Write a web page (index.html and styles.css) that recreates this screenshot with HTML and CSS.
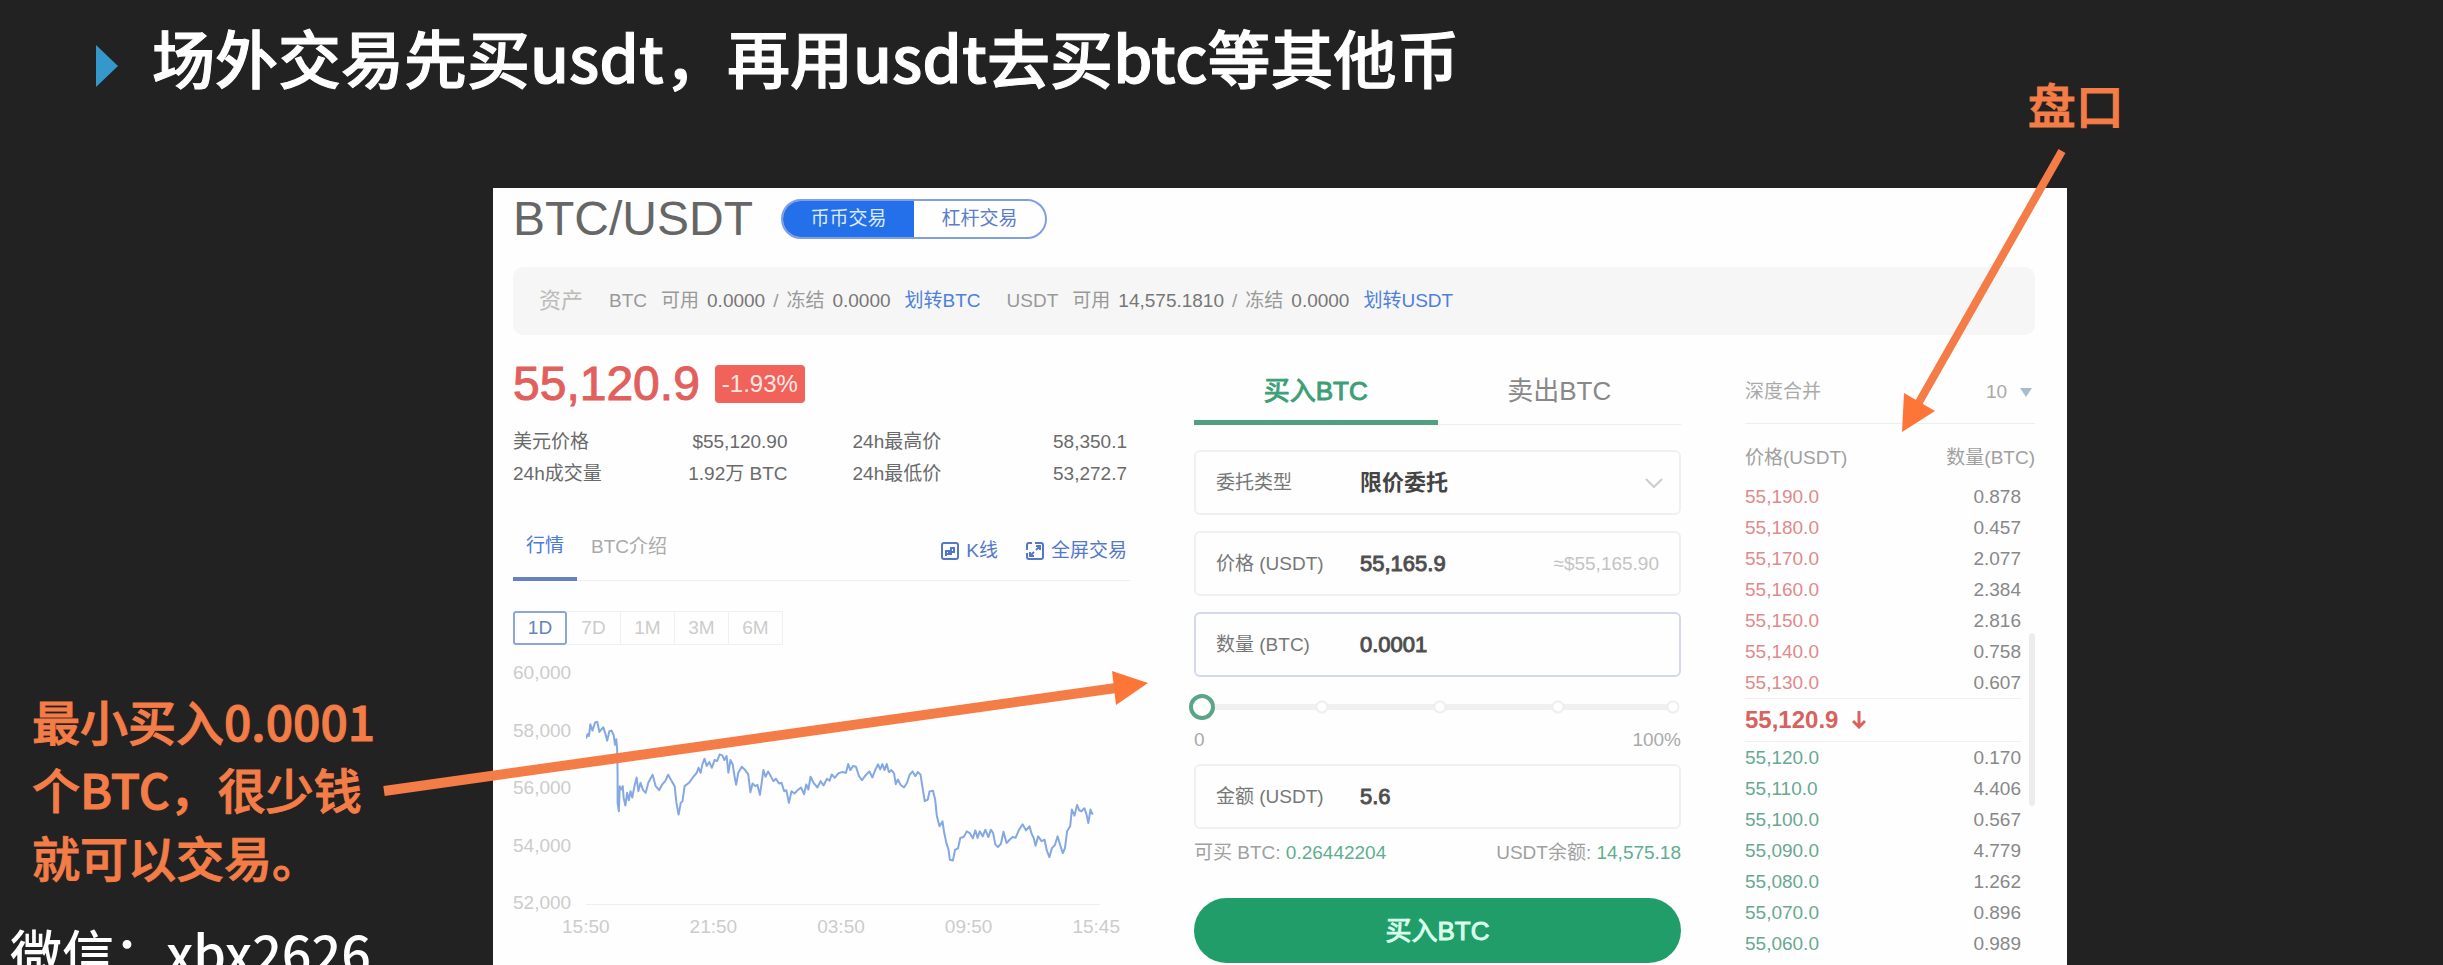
FILE: index.html
```html
<!DOCTYPE html>
<html lang="zh-CN">
<head>
<meta charset="utf-8">
<title>BTC/USDT</title>
<link rel="stylesheet" href="styles.css">
</head>
<body>
<main class="slide">
  <header class="slide-title">
    <svg class="bullet" viewBox="0 0 22 42" aria-hidden="true"><path d="M0 0L22 21L0 42Z"/></svg>
    <h1>场外交易先买usdt，再用usdt去买btc等其他币</h1>
  </header>

  <aside class="notes">
    <p class="note">最小买入0.0001<br>个BTC，很少钱<br>就可以交易。</p>
    <p class="wechat">微信：xbx2626</p>
  </aside>

  <section class="panel">
    <div class="pair">
      <h2>BTC/USDT</h2>
      <div class="mode">
        <button class="mode-btn active" type="button">币币交易</button>
        <button class="mode-btn" type="button">杠杆交易</button>
      </div>
    </div>

    <div class="assets">
      <span class="assets-title">资产</span>
      <div class="asset">
        <span class="coin">BTC</span>
        <span class="amounts"><span>可用</span><b>0.0000</b><span>/</span><span>冻结</span><b>0.0000</b></span>
        <a class="link" href="#">划转BTC</a>
      </div>
      <div class="asset">
        <span class="coin">USDT</span>
        <span class="amounts"><span>可用</span><b>14,575.1810</b><span>/</span><span>冻结</span><b>0.0000</b></span>
        <a class="link" href="#">划转USDT</a>
      </div>
    </div>

    <div class="columns">
      <section class="market">
        <div class="price-row">
          <strong class="price">55,120.9</strong>
          <span class="change">-1.93%</span>
        </div>
        <dl class="stats">
          <div><dt>美元价格</dt><dd>$55,120.90</dd></div>
          <div><dt>24h最高价</dt><dd>58,350.1</dd></div>
          <div><dt>24h成交量</dt><dd>1.92万 BTC</dd></div>
          <div><dt>24h最低价</dt><dd>53,272.7</dd></div>
        </dl>
        <nav class="tabs">
          <a class="tab active" href="#">行情</a>
          <a class="tab" href="#">BTC介绍</a>
          <div class="tools">
            <a class="tool" href="#">
              <svg viewBox="0 0 18 18" aria-hidden="true"><rect x="1" y="1" width="16" height="16" rx="2"/><path d="M5 8v6M5 9h3v3H5M10 5v8M10 6h3v4h-3"/></svg>K线</a>
            <a class="tool" href="#">
              <svg viewBox="0 0 18 18" aria-hidden="true"><path d="M6 1H3a2 2 0 0 0-2 2v5M1 11v4a2 2 0 0 0 2 2h12a2 2 0 0 0 2-2V3a2 2 0 0 0-2-2H9M10 4h4v4M14 4l-4 4M8 14H4v-4M4 14l4-4"/></svg>全屏交易</a>
          </div>
        </nav>
        <div class="ranges">
          <button class="range active" type="button">1D</button>
          <button class="range" type="button">7D</button>
          <button class="range" type="button">1M</button>
          <button class="range" type="button">3M</button>
          <button class="range" type="button">6M</button>
        </div>
        <div class="chart">
          <div class="y-axis"><span>60,000</span><span>58,000</span><span>56,000</span><span>54,000</span><span>52,000</span></div>
          <svg class="plot" viewBox="222 102 1188 690" preserveAspectRatio="none" role="img" aria-label="BTC 价格走势">
            <polyline points="222,298 226,284 229,290 232,255 237,274 243,250 248,248 253,278 258,270 262,264 266,280 271,304 276,276 281,274 286,288 289,316 292,300 294,330 295,400 295,490 298,515 300,440 304,450 307,440 309,475 313,498 317,460 321,482 325,455 329,474 334,440 339,414 343,455 348,430 354,452 360,460 366,430 376,406 383,440 391,452 398,435 405,425 412,406 420,425 427,440 431,490 436,525 441,490 445,485 450,440 460,430 470,412 478,400 482,385 487,400 491,375 496,358 501,380 507,368 513,385 519,362 525,365 531,345 537,348 542,362 547,350 551,400 556,362 561,375 565,408 569,436 574,400 582,382 590,392 597,405 602,458 607,432 613,440 618,436 624,466 628,430 632,392 637,412 643,396 649,410 655,425 661,418 668,432 674,430 680,455 685,452 691,490 697,455 704,462 711,452 719,444 726,464 731,435 736,450 741,412 748,430 757,444 764,425 771,438 779,418 785,424 790,405 797,415 805,402 813,398 823,400 828,374 833,392 839,380 846,382 853,410 860,422 868,408 877,396 884,414 891,390 897,375 902,390 907,374 912,392 917,374 922,398 928,392 934,402 938,434 943,420 949,436 957,444 964,430 970,406 977,396 983,410 989,398 995,405 1000,445 1005,485 1012,480 1016,456 1024,454 1029,480 1033,530 1039,560 1046,545 1050,580 1055,610 1060,630 1063,660 1070,662 1075,630 1082,625 1087,595 1095,592 1102,575 1109,580 1116,596 1122,572 1127,595 1132,575 1139,590 1145,570 1152,592 1158,570 1163,580 1168,614 1174,622 1181,612 1187,576 1194,610 1201,600 1208,592 1215,594 1223,570 1231,554 1239,572 1247,560 1252,582 1257,596 1261,618 1267,590 1275,604 1282,600 1287,632 1293,652 1299,625 1306,615 1312,590 1319,620 1324,640 1329,625 1334,575 1341,560 1345,510 1351,528 1357,496 1362,512 1367,515 1374,506 1379,525 1383,550 1388,510 1393,525"/>
          </svg>
          <div class="x-axis"><span>15:50</span><span>21:50</span><span>03:50</span><span>09:50</span><span>15:45</span></div>
        </div>
      </section>

      <form class="order">
        <div class="sides">
          <button class="side active" type="button">买入BTC</button>
          <button class="side" type="button">卖出BTC</button>
        </div>
        <div class="fields">
          <div class="field">
            <label for="type">委托类型</label>
            <select id="type"><option>限价委托</option></select>
            <svg class="chevron" viewBox="0 0 18 10" aria-hidden="true"><path d="M1 1l8 8l8-8"/></svg>
          </div>
          <div class="field">
            <label for="price">价格 (USDT)</label>
            <input id="price" type="text" value="55,165.9">
            <span class="hint">≈$55,165.90</span>
          </div>
          <div class="field focus">
            <label for="amount">数量 (BTC)</label>
            <input id="amount" type="text" value="0.0001">
          </div>
        </div>
        <input class="slider" type="range" min="0" max="100" value="0" aria-label="比例">
        <div class="scale"><span>0</span><span>100%</span></div>
        <div class="field">
          <label for="total">金额 (USDT)</label>
          <input id="total" type="text" value="5.6">
        </div>
        <div class="balance">
          <span>可买 BTC: <em>0.26442204</em></span>
          <span>USDT余额: <em>14,575.18</em></span>
        </div>
        <button class="submit" type="button">买入BTC</button>
      </form>

      <section class="book">
        <div class="depth">
          <label for="depth">深度合并</label>
          <div class="depth-pick">
            <select id="depth"><option>10</option></select>
            <svg class="caret" viewBox="0 0 12 9" aria-hidden="true"><path d="M0 0H12L6 9Z"/></svg>
          </div>
        </div>
        <table>
          <thead><tr><th>价格(USDT)</th><th>数量(BTC)</th></tr></thead>
          <tbody class="asks">
            <tr><td>55,190.0</td><td>0.878</td></tr>
            <tr><td>55,180.0</td><td>0.457</td></tr>
            <tr><td>55,170.0</td><td>2.077</td></tr>
            <tr><td>55,160.0</td><td>2.384</td></tr>
            <tr><td>55,150.0</td><td>2.816</td></tr>
            <tr><td>55,140.0</td><td>0.758</td></tr>
            <tr><td>55,130.0</td><td>0.607</td></tr>
          </tbody>
          <tbody class="last">
            <tr><td colspan="2"><div class="last-price">55,120.9
              <svg viewBox="0 0 14 18" aria-hidden="true"><path d="M7 0v16M1 10l6 6l6-6"/></svg></div></td></tr>
          </tbody>
          <tbody class="bids">
            <tr><td>55,120.0</td><td>0.170</td></tr>
            <tr><td>55,110.0</td><td>4.406</td></tr>
            <tr><td>55,100.0</td><td>0.567</td></tr>
            <tr><td>55,090.0</td><td>4.779</td></tr>
            <tr><td>55,080.0</td><td>1.262</td></tr>
            <tr><td>55,070.0</td><td>0.896</td></tr>
            <tr><td>55,060.0</td><td>0.989</td></tr>
          </tbody>
        </table>
        <span class="scroll-thumb"></span>
      </section>
    </div>
  </section>

  <p class="callout">盘口</p>
  <svg class="arrows" viewBox="0 0 2443 965" preserveAspectRatio="none" aria-hidden="true">
    <path class="shaft" d="M384 791L1116 688"/>
    <path class="head" d="M1148 683L1112 671L1116 705Z"/>
    <path class="shaft thin" d="M2062 151L1918 404"/>
    <path class="head" d="M1902 432L1904 393L1935 411Z"/>
  </svg>
</main>
</body>
</html>
```
FILE: styles.css
```css
* { box-sizing: border-box; }
html, body { height: 100%; }
body {
  margin: 0;
  background: #222;
  color: #666;
  font: 19px/24px "Liberation Sans", "Noto Sans CJK SC", sans-serif;
}
h1, h2, p, dl, dd { margin: 0; }
a { text-decoration: none; }
button, input, select { font: inherit; color: inherit; }
button { border: 0; background: none; padding: 0; cursor: pointer; }

.slide {
  position: relative;
  height: 100vh;
  overflow: hidden;
  display: grid;
  grid-template-columns: 493fr 1574fr 376fr;
  grid-template-rows: auto 1fr;
}
.slide-title {
  grid-column: 1 / -1;
  display: flex;
  align-items: center;
  gap: 34px;
  padding: 8px 96px 84px;
}
.slide-title h1 {
  color: #fff;
  font: 500 63px/96px "Noto Sans CJK SC", sans-serif;
  -webkit-text-stroke: 1px #fff;
}
.bullet { width: 22px; height: 42px; margin-top: 20px; fill: #3498cb; }

.notes { padding-top: 498px; font-family: "Noto Sans CJK SC", sans-serif; font-weight: 500; }
.note { padding-left: 32px; color: #f47c46; font-size: 48px; line-height: 68px; white-space: nowrap; -webkit-text-stroke: 1px #f47c46; }
.wechat { margin-top: 30px; padding-left: 10px; color: #fff; font-size: 52px; line-height: 64px; }

.callout {
  position: absolute;
  left: 83%;
  top: 69px;
  color: #f47c46;
  font: 500 48px/68px "Noto Sans CJK SC", sans-serif;
  -webkit-text-stroke: 1px #f47c46;
}
.arrows { position: absolute; inset: 0; width: 100%; height: 100%; pointer-events: none; }
.shaft { stroke: #f47c46; stroke-width: 10; }
.thin { stroke-width: 8; }
.head { fill: #fd7637; }

.panel { padding: 11px 32px 0 20px; background: #fefefe; }
.pair { display: flex; align-items: center; gap: 28px; }
.pair h2 { color: #666; font-size: 48px; font-weight: 400; line-height: 40px; }
.mode {
  display: flex;
  width: 266px;
  height: 40px;
  border: 2px solid #7f9fe0;
  border-radius: 20px;
  overflow: hidden;
}
.mode-btn { flex: 1; color: #5a7ec8; font-size: 19px; }
.mode-btn.active { background: #2470ea; color: #dcebff; }

.assets {
  display: flex;
  align-items: center;
  gap: 26px;
  height: 68px;
  margin-top: 28px;
  padding: 0 26px;
  border-radius: 10px;
  background: #f6f6f6;
  color: #999;
  white-space: nowrap;
}
.assets-title { color: #bbb; font-size: 22px; }
.asset { display: flex; gap: 14px; }
.amounts { display: flex; gap: 8px; }
.asset b { color: #777; font-weight: 400; }
.link { color: #4d7fdc; }

.columns {
  display: grid;
  grid-template-columns: minmax(0, 617fr) minmax(0, 487fr) minmax(0, 290fr);
  gap: 64px;
}

.market { padding-top: 30px; }
.price-row { display: flex; align-items: center; gap: 15px; height: 38px; }
.price { color: #e2605c; font-size: 48px; font-weight: 400; line-height: 38px; -webkit-text-stroke: 1px #e2605c; }
.change { padding: 0 7px; border-radius: 4px; background: #f0625a; color: #ffe9e5; font-size: 24px; line-height: 38px; }
.stats {
  display: grid;
  grid-template-columns: 1fr 1fr;
  column-gap: 65px;
  margin-top: 23px;
  padding-right: 3px;
  color: #6a6a6a;
  line-height: 32px;
}
.stats div { display: flex; justify-content: space-between; white-space: nowrap; }
.tabs { display: flex; gap: 14px; margin-top: 25px; border-bottom: 1px solid #eee; line-height: 64px; }
.tab { color: #aaa; white-space: nowrap; }
.tab.active { padding: 0 13px; color: #4a78dc; border-bottom: 4px solid #6482bd; margin-bottom: -1px; line-height: 62px; }
.tools { display: flex; gap: 28px; margin-left: auto; padding: 6px 3px 0 0; color: #5478c8; }
.tool { display: flex; align-items: center; gap: 7px; color: inherit; line-height: 24px; white-space: nowrap; }
.tool svg { width: 18px; height: 18px; fill: none; stroke: currentColor; stroke-width: 2; }
.ranges { display: flex; margin-top: 30px; }
.range { width: 54px; height: 34px; border: solid #f0f0f0; border-width: 1px 1px 1px 0; color: #ccc; }
.range.active { border: 2px solid #8ca6d8; border-radius: 3px; color: #6482bd; }

.chart { display: grid; grid-template-columns: 73px 1fr; margin-top: 16px; color: #ccc; }
.y-axis { display: flex; flex-direction: column; justify-content: space-between; height: 254px; }
.plot { width: calc(100% - 30px); height: 232px; margin-top: 12px; border-bottom: 1px solid #eee; }
.plot polyline { fill: none; stroke: #84a8e2; stroke-width: 2; stroke-linejoin: round; vector-effect: non-scaling-stroke; }
.x-axis { grid-column: 1 / -1; display: flex; justify-content: space-between; padding: 0 10px 0 49px; }

.order { padding-top: 26px; }
.sides { display: flex; height: 64px; box-shadow: inset 0 -1px #eee; }
.side { flex: 1; border-bottom: 5px solid transparent; color: #888; font-size: 26px; }
.side.active { color: #3d9f77; border-color: #4f9f80; -webkit-text-stroke: 1px #3d9f77; }
.fields { display: flex; flex-direction: column; gap: 16px; margin-top: 25px; }
.field {
  display: flex;
  align-items: center;
  height: 65px;
  padding: 0 20px;
  border: 2px solid #f0f0f0;
  border-radius: 6px;
}
.field.focus { border-color: #d3d9e8; }
.field label { flex: 0 0 144px; color: #777; white-space: nowrap; }
.field input, .field select {
  flex: 1;
  width: 0;
  min-width: 0;
  height: 100%;
  padding: 0;
  border: 0;
  outline: 0;
  background: none;
  appearance: none;
  color: #444;
  font-size: 22px;
}
.field select { font-weight: 700; }
.field input { -webkit-text-stroke: 1px #555; }
.hint { color: #c4c4c4; white-space: nowrap; }
.chevron { flex: none; width: 18px; height: 10px; margin-right: -4px; fill: none; stroke: #ccc; stroke-width: 2; }

.slider {
  display: block;
  width: calc(100% + 5px);
  height: 26px;
  margin: 17px 0 0 -5px;
  appearance: none;
  background:
    radial-gradient(circle at 27% 13px, #fff 4px, #eee 5px 6px, transparent 7px),
    radial-gradient(circle at 51% 13px, #fff 4px, #eee 5px 6px, transparent 7px),
    radial-gradient(circle at 75% 13px, #fff 4px, #eee 5px 6px, transparent 7px),
    radial-gradient(circle at calc(100% - 8px) 13px, #fff 4px, #eee 5px 6px, transparent 7px),
    linear-gradient(#f0f0f0, #f0f0f0) 13px 50% / calc(100% - 24px) 6px no-repeat;
}
.slider::-webkit-slider-thumb {
  appearance: none;
  width: 26px;
  height: 26px;
  border: 4px solid #5aa488;
  border-radius: 50%;
  background: #fff;
}
.scale { display: flex; justify-content: space-between; margin: 8px 0 12px; color: #aaa; }
.balance { display: flex; justify-content: space-between; margin-top: 12px; color: #a0a0a0; white-space: nowrap; }
.balance em { color: #5fae8e; font-style: normal; }
.submit {
  width: 100%;
  height: 65px;
  margin-top: 33px;
  border-radius: 33px;
  background: #219d6a;
  color: #d8ffec;
  font-size: 26px;
  -webkit-text-stroke: 1px #d8ffec;
}

.book { position: relative; padding-top: 26px; }
.depth { display: flex; justify-content: space-between; align-items: center; height: 63px; border-bottom: 1px solid #eee; color: #aaa; }
.depth-pick { display: flex; align-items: center; gap: 12px; padding-right: 3px; }
.depth-pick select { border: 0; padding: 0; background: none; appearance: none; }
.caret { width: 12px; height: 9px; fill: #a9bccb; }
.book table { width: 100%; border-collapse: collapse; white-space: nowrap; }
.book th { height: 57px; padding: 10px 0 0; color: #a0a0a0; font-weight: 400; text-align: left; }
.book td { height: 31px; padding: 0; }
.book td:nth-child(2) { padding-right: 14px; color: #888; }
.book th:nth-child(2), .book td:nth-child(2) { text-align: right; }
.asks { color: #e08a8c; }
.bids { color: #68a892; }
.last-price {
  display: flex;
  align-items: center;
  gap: 14px;
  height: 44px;
  margin-right: 14px;
  border: solid #f0f0f0;
  border-width: 1px 0;
  color: #d9625f;
  font-size: 24px;
  font-weight: 700;
}
.last-price svg { width: 14px; height: 18px; fill: none; stroke: currentColor; stroke-width: 3; }
.scroll-thumb { position: absolute; right: 0; top: 298px; width: 6px; height: 173px; border-radius: 3px; background: #ececec; }
```
